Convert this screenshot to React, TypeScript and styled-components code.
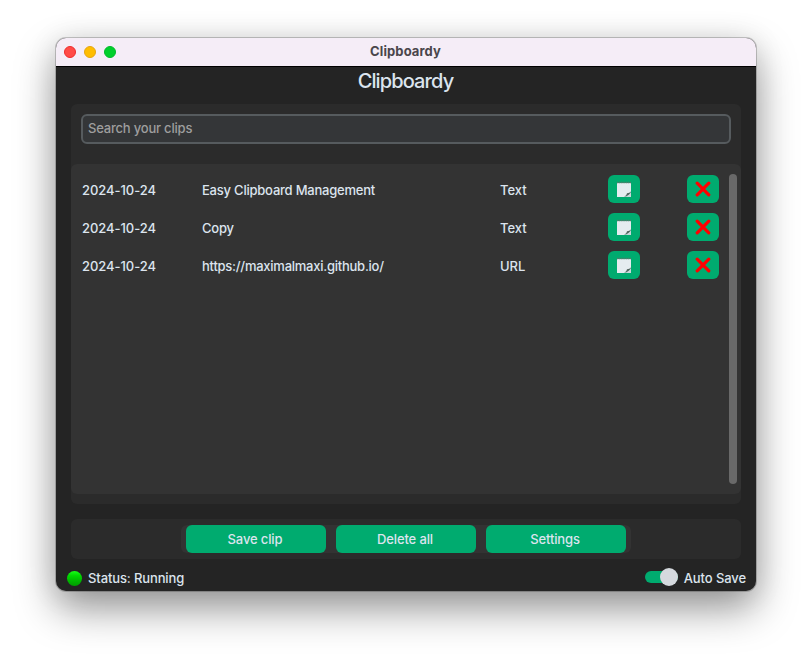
import React from "react";
import styled, { createGlobalStyle } from "styled-components";

const GlobalStyle = createGlobalStyle`
  * { box-sizing: border-box; }
  html, body { margin: 0; background: #fff; }
  body {
    font-family: Inter, "Liberation Sans", sans-serif;
    font-size: 13px;
    font-weight: 500;
    color: #dce4ee;
    overflow: hidden;
  }
  button, input { font: inherit; color: inherit; border: 0; padding: 0; margin: 0; }
`;

const Desktop = styled.div`
  height: 665px;
  width: 812px;
  padding: 38px 56px 0;
  overflow: hidden;
`;

const Window = styled.main`
  display: flex;
  flex-direction: column;
  width: 700px;
  height: 553px;
  border-radius: 10px;
  background: #242424;
  overflow: hidden;
  box-shadow: 0 0 0 1px rgba(0, 0, 0, 0.2), 0 18px 40px rgba(0, 0, 0, 0.4), 0 2px 30px rgba(0, 0, 0, 0.1);
`;

const TitleBar = styled.header`
  display: grid;
  grid-template-columns: 68px 1fr 70px;
  align-items: center;
  height: 29px;
  flex: none;
  background: #f5edf7;
  border-bottom: 1px solid #000;
`;

const Lights = styled.div`
  display: flex;
  gap: 8px;
  padding-left: 8px;
`;

const Light = styled.span<{ $fill: string; $edge: string }>`
  width: 12px;
  height: 12px;
  border-radius: 50%;
  background: ${(p) => p.$fill};
  border: 1px solid ${(p) => p.$edge};
`;

const WindowTitle = styled.div`
  text-align: center;
  line-height: 16px;
  padding: 0 0 2px 1px;
  font-weight: 700;
  color: #4a464b;
  letter-spacing: 0.1px;
`;

const Content = styled.div`
  display: flex;
  flex-direction: column;
  flex: 1;
  padding: 0 15px;
`;

const Heading = styled.h1`
  margin: 0;
  height: 37px;
  line-height: 29px;
  padding-right: 1px;
  font-size: 20px;
  font-weight: 500;
  text-align: center;
  letter-spacing: -0.88px;
`;

const ClipPanel = styled.section`
  display: flex;
  flex-direction: column;
  height: 400px;
  padding: 10px 0;
  border-radius: 6px;
  background: #2b2b2b;
`;

const Search = styled.input`
  height: 30px;
  margin: 0 10px 20px;
  padding: 0 5px 2px;
  border: 2px solid #565b5e;
  border-radius: 6px;
  background: #343638;
  outline: none;
  letter-spacing: -0.2px;
  &::placeholder { color: #9e9e9e; opacity: 1; }
`;

const ClipArea = styled.div`
  display: flex;
  justify-content: space-between;
  height: 330px;
  padding: 10px 4px 10px 11px;
  border-radius: 6px;
  background: #333333;
`;

const ClipList = styled.ul`
  margin: 0;
  padding: 1px 0 0;
  list-style: none;
`;

const ClipRow = styled.li`
  display: grid;
  grid-template-columns: 120px 298px 108px 79px 32px;
  align-items: center;
  height: 28px;
  margin-bottom: 10px;
`;

const Label = styled.span<{ $track?: number }>`
  white-space: nowrap;
  line-height: 16px;
  padding-top: 2px;
  letter-spacing: ${(p) => p.$track ?? 0}px;
`;

const ScrollThumb = styled.div`
  width: 8px;
  height: 310px;
  border-radius: 4px;
  background: #696969;
`;

const GreenButton = styled.button`
  display: flex;
  align-items: center;
  justify-content: center;
  height: 28px;
  border-radius: 6px;
  background: #00ab6f;
`;

const IconButton = styled(GreenButton)`
  width: 32px;
`;

const ActionPanel = styled.section`
  display: flex;
  justify-content: center;
  align-items: center;
  height: 40px;
  margin-top: 15px;
  border-radius: 6px;
  background: #2b2b2b;
`;

const ActionGroup = styled.div`
  display: flex;
  gap: 10px;
  padding: 0 5px;
  border-radius: 6px;
  background: #333333;
`;

const ActionButton = styled(GreenButton)`
  width: 140px;
  padding-right: 2px;
  letter-spacing: -0.13px;
`;

const StatusBar = styled.footer`
  display: flex;
  justify-content: space-between;
  height: 31px;
  margin: 0 -5px 0 -4px;
`;

const StatusItem = styled.div<{ $gap: number }>`
  display: flex;
  align-items: center;
  gap: ${(p) => p.$gap}px;
  height: 36px;
`;

const StatusDot = styled.span`
  width: 15px;
  height: 15px;
  margin-top: 2px;
  border-radius: 50%;
  background: linear-gradient(#19ff19 0%, #00d900 32%, #00b800 65%, #009c00 100%);
`;

const Switch = styled.span`
  display: flex;
  align-items: center;
  justify-content: flex-end;
  width: 33px;
  height: 12px;
  border-radius: 6px;
  background: #00ab6f;
`;

const Knob = styled.span`
  width: 18px;
  height: 18px;
  flex: none;
  border-radius: 50%;
  background: #d5d9de;
`;

const NoteIcon = () => (
  <svg width="16" height="18" viewBox="0 0 16 18">
    <path d="M1 3H15V12L9.5 17H1Z" fill="#e5ecf0" />
    <path d="M15 12V17H9.5Z" fill="#c9d6da" />
    <path d="M1 2.6H15" stroke="#527c6d" strokeWidth="1.5" strokeDasharray="1.3 .5" />
    <path d="M8 16.9Q10.8 15.8 11 13.2Q13.7 13.2 15 11.2Q13.9 15.4 8 16.9Z" fill="#53645f" />
  </svg>
);

const CrossIcon = () => (
  <svg width="16" height="16" viewBox="0 0 16 16">
    <path
      d="M2.2 2.2L13.8 13.8M13.8 2.2L2.2 13.8"
      stroke="#ff0000"
      strokeWidth="3.2"
      strokeLinecap="round"
    />
  </svg>
);

const clips = [
  { date: "2024-10-24", text: "Easy Clipboard Management", kind: "Text", track: -0.22 },
  { date: "2024-10-24", text: "Copy", kind: "Text", track: -0.2 },
  { date: "2024-10-24", text: "https://maximalmaxi.github.io/", kind: "URL", track: -0.25 },
];

export default function App() {
  return (
    <>
      <GlobalStyle />
      <Desktop>
        <Window>
          <TitleBar>
            <Lights>
              <Light $fill="#ff4b47" $edge="#ee2c2c" />
              <Light $fill="#ffbd00" $edge="#e5a510" />
              <Light $fill="#00d02c" $edge="#00b92a" />
            </Lights>
            <WindowTitle>Clipboardy</WindowTitle>
          </TitleBar>
          <Content>
            <Heading>Clipboardy</Heading>
            <ClipPanel>
              <Search placeholder="Search your clips" />
              <ClipArea>
                <ClipList>
                  {clips.map((clip) => (
                    <ClipRow key={clip.text}>
                      <Label $track={-0.05}>{clip.date}</Label>
                      <Label $track={clip.track}>{clip.text}</Label>
                      <Label $track={-0.05}>{clip.kind}</Label>
                      <IconButton aria-label="Copy clip"><NoteIcon /></IconButton>
                      <IconButton aria-label="Delete clip"><CrossIcon /></IconButton>
                    </ClipRow>
                  ))}
                </ClipList>
                <ScrollThumb />
              </ClipArea>
            </ClipPanel>
            <ActionPanel>
              <ActionGroup>
                <ActionButton>Save clip</ActionButton>
                <ActionButton>Delete all</ActionButton>
                <ActionButton>Settings</ActionButton>
              </ActionGroup>
            </ActionPanel>
            <StatusBar>
              <StatusItem $gap={6}>
                <StatusDot />
                <Label $track={-0.12}>Status: Running</Label>
              </StatusItem>
              <StatusItem $gap={6}>
                <Switch><Knob /></Switch>
                <Label $track={-0.08}>Auto Save</Label>
              </StatusItem>
            </StatusBar>
          </Content>
        </Window>
      </Desktop>
    </>
  );
}
